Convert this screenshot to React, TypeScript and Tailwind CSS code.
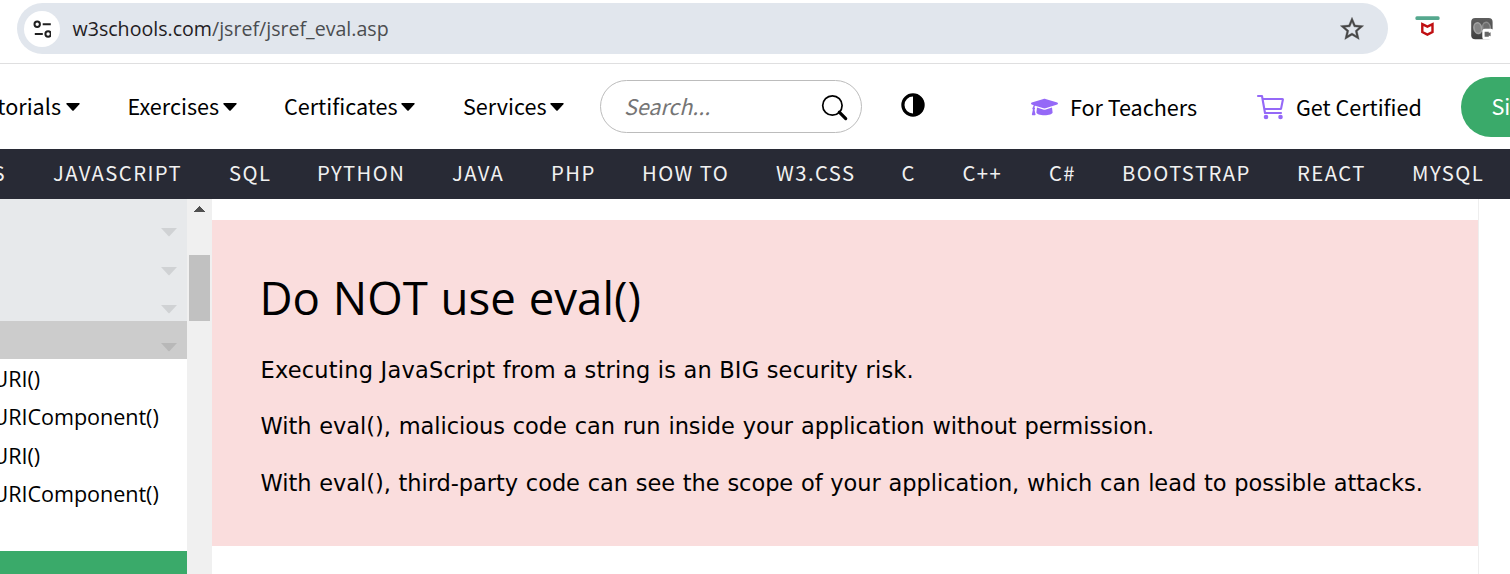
import React from 'react';

const menus = [
  { label: 'Exercises', box: 'ml-[47.5px] w-[109.5px]' },
  { label: 'Certificates', box: 'ml-[47px] w-[131px]' },
  { label: 'Services', box: 'ml-[48px] w-[101px]' },
];

const topics = [
  { label: 'JAVASCRIPT', box: 'w-[176px]' },
  { label: 'SQL', box: 'w-[88px]' },
  { label: 'PYTHON', box: 'w-[135px]' },
  { label: 'JAVA', box: 'w-[99px]' },
  { label: 'PHP', box: 'w-[91px]' },
  { label: 'HOW TO', box: 'w-[134px]' },
  { label: 'W3.CSS', box: 'w-[125.5px]' },
  { label: 'C', box: 'w-[61px]' },
  { label: 'C++', box: 'w-[86.5px]' },
  { label: 'C#', box: 'w-[73px]' },
  { label: 'BOOTSTRAP', box: 'w-[175px]' },
  { label: 'REACT', box: 'w-[115px]' },
  { label: 'MYSQL', box: 'w-[97px]' },
];

const references = ['URI()', 'URIComponent()', 'URI()', 'URIComponent()'];

function Caret() {
  return (
    <svg className="h-2 w-[14px] shrink-0" viewBox="0 0 14 8">
      <path d="M1 0H13Q14.2 .3 13.4 1.2L7.7 7.4Q7 8 6.3 7.4L.6 1.2Q-.2 .3 1 0Z" fill="#000" />
    </svg>
  );
}

function SideCaret({ className }: { className: string }) {
  return (
    <svg className="h-[9px] w-4" viewBox="0 0 16 9">
      <path d="M0 0H16L8.6 8Q8 8.6 7.4 8Z" className={className} />
    </svg>
  );
}

function AddressBar() {
  return (
    <div className="flex h-16 shrink-0 items-start border-b border-[#dfdfe0] pt-[3px] pl-[17px]">
      <div className="flex h-[51px] w-[1371px] items-center rounded-full bg-[#e1e6ed] pl-[7px]">
        <span className="flex size-9 items-center justify-center rounded-full bg-white">
          <svg className="size-[18px]" viewBox="0 0 18 18" fill="none" stroke="#1f1f1f" strokeWidth="2">
            <circle cx="4.2" cy="4.3" r="2.7" />
            <path d="M9.7 4.2H17.8M1.8 14H9.8" />
            <circle cx="15.1" cy="14" r="2.7" />
          </svg>
        </span>
        <span className="ml-[12.5px] font-['Open_Sans',sans-serif] text-[19.6px] whitespace-pre text-[#4b4d50]">
          <span className="text-[#1f2023]">w3schools.com</span>/jsref/jsref_eval.asp
        </span>
        <svg className="mr-[22px] ml-auto size-7" viewBox="0 0 24 24" fill="#474747" stroke="#474747" strokeWidth=".3">
          <path d="m22 9.24-7.19-.62L12 2 9.19 8.63 2 9.24l5.46 4.73L5.82 21 12 17.27 18.18 21l-1.63-7.03L22 9.24zM12 15.4l-3.76 2.27 1-4.28-3.32-2.88 4.38-.38L12 6.1l1.71 4.04 4.38.38-3.32 2.88 1 4.28L12 15.4z" />
        </svg>
      </div>
      <svg className="mt-[13px] ml-[27px] h-5 w-[25px]" viewBox="0 0 25 20">
        <rect x=".4" y=".3" width="24.2" height="3.8" rx="1.5" fill="#55a88e" />
        <path d="M7.3 8.2 12.4 10.7 17.5 8.2V16L12.4 18.6 7.3 16Z" fill="none" stroke="#c00f12" strokeWidth="2.4" />
      </svg>
      <svg className="mt-[14px] ml-[31px] h-[23px] w-[23px]" viewBox="0 0 23 23">
        <defs>
          <linearGradient id="tile" x1="0" y1="0" x2="0" y2="1">
            <stop offset="0" stopColor="#5e5e5e" />
            <stop offset="1" stopColor="#3f3f3f" />
          </linearGradient>
        </defs>
        <rect x=".2" y="1" width="21.4" height="21.3" rx="4" fill="url(#tile)" />
        <ellipse cx="6.8" cy="11.2" rx="3.8" ry="5.4" fill="#858585" stroke="#a0a0a0" strokeWidth="1.6" transform="rotate(-12 6.8 11.2)" />
        <ellipse cx="15.5" cy="10.5" rx="3.8" ry="5.2" fill="#6d6d6d" stroke="#8c8c8c" strokeWidth="1.6" transform="rotate(-12 15.5 10.5)" />
        <rect x="11.3" y="11.7" width="11.2" height="10.8" rx="2.6" fill="#fff" />
        <path d="M13.6 14.7h4.2v1.2l1.8-.7v4l-1.8-.7v1.2h-4.2z" fill="#666" />
      </svg>
    </div>
  );
}

function SiteHeader() {
  return (
    <header className="flex h-[85px] shrink-0 items-center overflow-hidden text-[21.6px] whitespace-nowrap">
      <div className="flex w-[80px] shrink-0 items-center justify-end gap-[5px]">
        <span className="-mt-[2px] leading-8">Tutorials</span>
        <Caret />
      </div>
      {menus.map((m) => (
        <div key={m.label} className={`flex shrink-0 items-center justify-between ${m.box}`}>
          <span className="-mt-[2px] leading-8">{m.label}</span>
          <Caret />
        </div>
      ))}
      <div className="ml-[36px] flex h-[53px] w-[262px] shrink-0 items-center rounded-full border border-[#bcbcbc] pl-[23px]">
        <span className="-mt-[1px] text-[21.4px] leading-8 text-[#757575] italic">Search...</span>
        <svg className="mr-[12px] ml-auto size-[28px]" viewBox="0 0 28 28" fill="none" stroke="#000">
          <circle cx="11.4" cy="12.5" r="9.7" strokeWidth="1.7" />
          <path d="M18.3 19.2 24.7 25.6" strokeWidth="3.2" strokeLinecap="round" />
        </svg>
      </div>
      <svg className="-mt-[3px] ml-[39px] size-6 shrink-0" viewBox="0 0 24 24">
        <circle cx="12" cy="12" r="10.1" fill="none" stroke="#000" strokeWidth="3.2" />
        <path d="M12 1A11 11 0 0 1 12 23Z" fill="#000" />
      </svg>
      <svg className="ml-[106px] h-[22px] w-[27px] shrink-0" viewBox="0 0 640 512" preserveAspectRatio="none" fill="#9569f7">
        <path d="M622.34 153.2 343.4 67.5c-15.2-4.67-31.6-4.67-46.79 0L17.66 153.2c-23.54 7.23-23.54 38.36 0 45.59l48.63 14.94c-10.67 13.19-17.23 29.28-17.88 46.9C38.78 266.15 32 276.11 32 288c0 10.78 5.68 19.85 13.86 25.65L20.33 428.53C18.11 438.52 25.71 448 35.94 448h56.11c10.24 0 17.84-9.48 15.62-19.47L82.14 313.65C90.32 307.85 96 298.78 96 288c0-11.57-6.47-21.25-15.66-26.87.76-15.02 8.44-28.3 20.69-36.72L296.6 284.5c9.06 2.78 26.44 6.25 46.79 0l278.95-85.7c23.55-7.24 23.55-38.36 0-45.6zM352.79 315.09c-28.53 8.76-52.84 3.92-65.59 0l-145.02-44.55L128 384c0 35.35 85.96 64 192 64s192-28.65 192-64l-14.18-113.47-145.03 44.56z" />
      </svg>
      <span className="ml-[12px] w-[185px] shrink-0 tracking-[-0.04px] leading-8">For Teachers</span>
      <svg className="size-8 shrink-0" viewBox="0 0 512 512" fill="none" stroke="#9569f7" strokeWidth="34" strokeLinecap="round" strokeLinejoin="round">
        <circle cx="176" cy="416" r="20" fill="#9569f7" />
        <circle cx="408" cy="416" r="20" fill="#9569f7" />
        <path d="M48 80h64l48 272h256M160 288h249.44a8 8 0 0 0 7.85-6.43l28.8-144a8 8 0 0 0-7.85-9.57H128" />
      </svg>
      <span className="ml-[9px] w-[165px] shrink-0 tracking-[-0.02px] leading-8">Get Certified</span>
      <span className="flex h-[60px] w-[132px] shrink-0 items-center rounded-full bg-[#3aaa6a] pl-[30.5px] text-white">
        <span className="-mt-[1px] leading-8">Sign Up</span>
      </span>
    </header>
  );
}

function TopicBar() {
  return (
    <nav className="flex h-[50px] shrink-0 items-center overflow-hidden bg-[#282a35] pb-[1px] text-[20.25px] tracking-[1.45px] whitespace-nowrap text-[#f1f1f1]">
      <span className="flex w-[53px] shrink-0 justify-end pr-[47px]">CSS</span>
      {topics.map((t) => (
        <span key={t.label} className={`shrink-0 ${t.box}`}>
          {t.label}
        </span>
      ))}
    </nav>
  );
}

function Sidebar() {
  return (
    <aside className="flex w-[187px] shrink-0 flex-col bg-white">
      <div className="flex h-[122px] flex-col items-end bg-[#e7e9eb] pt-[29px] pr-[10px]">
        <div className="h-[39px]"><SideCaret className="fill-[#d0d2d4]" /></div>
        <div className="h-[38px]"><SideCaret className="fill-[#d0d2d4]" /></div>
        <SideCaret className="fill-[#d0d2d4]" />
      </div>
      <div className="flex h-[38px] justify-end bg-[#ccc] pt-[22px] pr-[10px]">
        <SideCaret className="fill-[#b8b8b8]" />
      </div>
      <div className="h-[192px] overflow-hidden pt-px font-['Open_Sans',sans-serif] text-[21.6px]">
        {references.map((r, i) => (
          <div key={i} className="-ml-[7.5px] h-[38.4px] leading-[38.4px] tracking-[-0.05px]">{r}</div>
        ))}
      </div>
      <div className="h-[23px] bg-[#3aaa6a]" />
    </aside>
  );
}

function Scrollbar() {
  return (
    <div className="flex w-[25px] shrink-0 flex-col items-center bg-[#f0f0f0] pt-[7px]">
      <svg className="h-[6px] w-[11px]" viewBox="0 0 11 6" shapeRendering="crispEdges">
        <path d="M0 6 5.5 0 11 6Z" fill="#505050" />
      </svg>
      <div className="mt-[43px] h-[66px] w-[21px] bg-[#c1c1c1]" />
    </div>
  );
}

export default function App() {
  return (
    <div className="flex h-[574px] w-[1510px] flex-col overflow-hidden bg-white font-['Noto_Sans_CJK_SC',sans-serif] text-black">
      <AddressBar />
      <SiteHeader />
      <TopicBar />
      <div className="flex min-h-0 flex-1">
        <Sidebar />
        <Scrollbar />
        <main className="w-[1267px] shrink-0 border-r border-[#eee] pt-[21px]">
          <section className="h-[326px] bg-[#fadddd] pl-[48.5px] font-['DejaVu_Sans',sans-serif] text-[22.5px] whitespace-nowrap">
            <h1 className="-ml-[1px] pt-[47px] font-['Open_Sans',sans-serif] text-[45.6px] leading-[60px] font-normal [word-spacing:1px]">Do NOT use eval()</h1>
            <p className="mt-[25px] leading-9 tracking-[0.2px]">Executing JavaScript from a string is an BIG security risk.</p>
            <p className="mt-[20px] leading-9 tracking-[-0.05px] [word-spacing:0.8px]">With eval(), malicious code can run inside your application without permission.</p>
            <p className="mt-[21px] leading-9 tracking-[-0.05px] [word-spacing:0.7px]">With eval(), third-party code can see the scope of your application, which can lead to possible attacks.</p>
          </section>
        </main>
      </div>
    </div>
  );
}
